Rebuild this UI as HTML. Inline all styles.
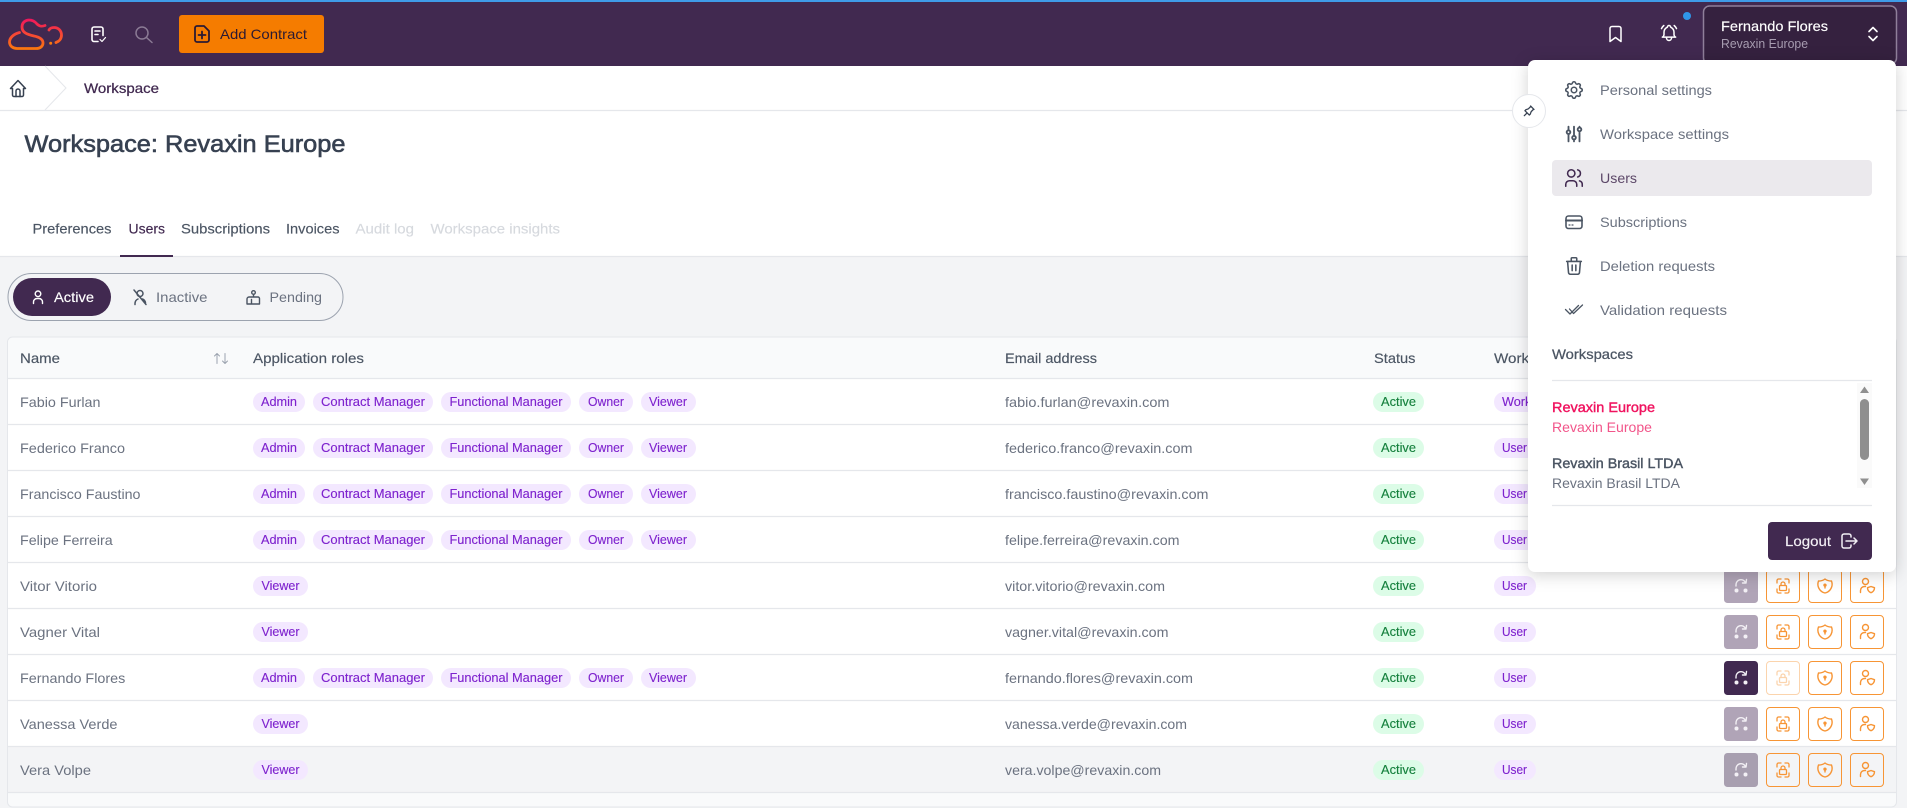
<!DOCTYPE html>
<html lang="en"><head><meta charset="utf-8"><title>Workspace: Revaxin Europe</title>
<style>
html,body{margin:0;padding:0;width:1907px;height:808px;overflow:hidden;background:#f3f4f6}
svg{display:block}
text{font-family:"Liberation Sans",sans-serif;font-size:14px;fill:currentColor;white-space:pre}
.m{stroke:currentColor;stroke-width:.25px}
.s{stroke:currentColor;stroke-width:.15px}
.c{font-size:12.5px;color:#7e22ce;stroke:currentColor;stroke-width:.12px}
.g{font-size:12.5px;color:#15803d;stroke:currentColor;stroke-width:.12px}
.n{color:#6b7280}
.h{color:#4b5563}
.mi{color:#6b7280}
.ic{fill:none;stroke:currentColor;stroke-linecap:round;stroke-linejoin:round}
.ln{stroke:#e5e7eb;stroke-width:1.2}
</style></head><body>
<svg xmlns="http://www.w3.org/2000/svg" width="1907" height="808" viewBox="0 0 1907 808">
<defs>
<linearGradient id="lg" gradientUnits="userSpaceOnUse" x1="30" y1="18" x2="30" y2="50"><stop offset="0" stop-color="#f0135f"/><stop offset="1" stop-color="#fb7a0c"/></linearGradient>
<g id="a1" class="ic" stroke-width="1.400"><path d="M-5 0V-1a5 5 0 0 1 9.500-2.500"/><path d="M5.500 -6.500l-.5 3.500h-3.500"/><circle cx="-4.500" cy="4.500" r="2" fill="currentColor" stroke="none"/><circle cx="4.500" cy="4.500" r="2" fill="currentColor" stroke="none"/></g>
<g id="a2" class="ic" stroke-width="1.300"><path d="M-6 -3v-2.500a1.500 1.500 0 0 1 1.500-1.500H-2M2 -7h2.500A1.500 1.500 0 0 1 6 -5.500V-3M6 3v2.500A1.500 1.500 0 0 1 4.500 7H2M-2 7h-2.500A1.500 1.500 0 0 1 -6 5.500V3"/><rect x="-3.500" y="-.5" width="7" height="5" rx="1"/><path d="M-2 -.5V-2a2 2 0 0 1 4 0V-.5"/></g>
<g id="a3" class="ic" stroke-width="1.400"><path d="M0 -7a10 10 0 0 0 6.500 2A9 9 0 0 1 0 7a9 9 0 0 1-6.500-12A10 10 0 0 0 0 -7z"/><circle cx="0" cy="-.8" r="1" fill="currentColor"/><path d="M0 0v2"/></g>
<g id="a4" class="ic" stroke-width="1.400"><circle cx="-1.500" cy="-4.500" r="3"/><path d="M-6.500 6.500v-2a4 4 0 0 1 4-4h1"/><path d="M4 0.500l3.500 1.200c0 2.500-1.200 4-3.500 5-2.300-1-3.500-2.500-3.500-5z"/></g>
<g id="b"><rect x="-16.500" y="-16.500" width="33" height="33" rx="3.500" fill="none" stroke="#f79535" stroke-width="1"/></g>
</defs>

<!-- page -->
<rect width="1907" height="808" fill="#f3f4f6"/>
<rect y="66" width="1907" height="190" fill="#fff"/>

<!-- header -->
<rect width="1907" height="66" fill="#412950"/>
<rect width="1907" height="2" fill="#3f9be8"/>
<g fill="none" stroke="url(#lg)" stroke-width="2.800" stroke-linecap="round" stroke-linejoin="round">
<path d="M19.500 32.500C13.500 34 9.500 38 9.500 42C9.500 46 13 48.500 17 48.500L36 48.500C40.500 48.500 43 46 43 43C43 39 39 37 34 36C28 34.500 22 33 22 27C22 22 26 20 29 20C33 20 35 21.500 37 24C39 26 41 27 45 25.500"/>
<path d="M49 30C50 28 52 27.500 54 27.500C58.500 27.500 61.500 31 61.500 35C61.500 39 59 41.500 56 42.500"/>
</g>
<circle cx="50.700" cy="43.300" r="1.500" fill="#fb7a0c"/>
<g class="ic" stroke-width="1.600" style="color:#fff"><path d="M98 41.500H94a2 2 0 0 1-2-2V29a2 2 0 0 1 2-2h7a2 2 0 0 1 2 2v6.500"/><path d="M95 31h5M95 34.500h3"/><path d="M100 39.500l2 2 3.500-4" stroke-width="1.200"/></g>
<g class="ic" stroke-width="1.500" style="color:#8a7a94"><circle cx="142" cy="33" r="6"/><path d="M146.500 37.500l5.500 5"/></g>
<rect x="179" y="15" width="145" height="38" rx="3" fill="#f57c00"/>
<g class="ic" stroke-width="1.800" style="color:#2b1a33"><path d="M197 26h7l5 5v9a2 2 0 0 1-2 2h-10a2 2 0 0 1-2-2V28a2 2 0 0 1 2-2z"/><path d="M202 31.500v7M198.500 35h7"/></g>
<text x="220" y="39" textLength="87" lengthAdjust="spacingAndGlyphs" style="color:#2b1a33">Add Contract</text>

<g class="ic" stroke-width="1.500" style="color:#fff"><path d="M1610 41.500V28.500a2 2 0 0 1 2-2h7a2 2 0 0 1 2 2V41.500l-5.500-4z"/></g>
<svg x="1659" y="23" width="20" height="20" viewBox="0 0 24 24" class="ic" stroke-width="1.800" style="color:#fff"><path d="M10 5a2 2 0 1 1 4 0a7 7 0 0 1 4 6v3a4 4 0 0 0 2 3h-16a4 4 0 0 0 2-3v-3a7 7 0 0 1 4-6M9 17v1a3 3 0 0 0 6 0v-1M21 6.727a11.050 11.050 0 0 0-2.794-3.727M3 6.727a11.050 11.050 0 0 1 2.792-3.727"/></svg>
<circle cx="1687" cy="16" r="4" fill="#2f96e8"/>
<rect x="1703.500" y="6" width="193" height="58" rx="6" fill="#35213f" stroke="#8f7f9a" stroke-width="1.500"/>
<text x="1721" y="31" textLength="107" lengthAdjust="spacingAndGlyphs" class="s" style="color:#fff">Fernando Flores</text>
<text x="1721" y="48" textLength="87" lengthAdjust="spacingAndGlyphs" style="font-size:12.500px;color:#a79cb0">Revaxin Europe</text>
<g class="ic" stroke-width="1.600" style="color:#fff"><path d="M1869 31.500l4-4 4 4M1869 36.500l4 4 4-4"/></g>

<!-- breadcrumb -->
<line x1="0" x2="1907" y1="110.500" y2="110.500" class="ln"/>
<path d="M45 66L66 88L45 110" fill="none" stroke="#e5e7eb" stroke-width="1"/>
<g class="ic" stroke-width="1.500" style="color:#374151"><path d="M10.500 88.500L18 80.500L25.500 88.500H23.500V95a1.500 1.500 0 0 1-1.500 1.500H14a1.500 1.500 0 0 1-1.500-1.500V88.500z"/><path d="M16 96.500V91a2 2 0 0 1 4 0v5.500"/></g>
<text x="84" y="93" textLength="75" lengthAdjust="spacingAndGlyphs" class="m" style="color:#412950">Workspace</text>

<!-- title -->
<text x="24.500" y="152" textLength="321" lengthAdjust="spacingAndGlyphs" class="m" style="font-size:24px;color:#374151;stroke-width:.6px">Workspace: Revaxin Europe</text>

<!-- tabs -->
<line x1="0" x2="1907" y1="256.500" y2="256.500" class="ln"/>
<text x="32.500" y="233.500" textLength="79" lengthAdjust="spacingAndGlyphs" class="s" style="color:#4b5563">Preferences</text>
<text x="128.500" y="233.500" textLength="36.500" lengthAdjust="spacingAndGlyphs" class="s" style="color:#412950">Users</text>
<text x="181" y="233.500" textLength="89" lengthAdjust="spacingAndGlyphs" class="s" style="color:#4b5563">Subscriptions</text>
<text x="286" y="233.500" textLength="53.500" lengthAdjust="spacingAndGlyphs" class="s" style="color:#4b5563">Invoices</text>
<text x="355.500" y="233.500" textLength="58.500" lengthAdjust="spacingAndGlyphs" class="s" style="color:#d6d9de">Audit log</text>
<text x="430.500" y="233.500" textLength="129.500" lengthAdjust="spacingAndGlyphs" class="s" style="color:#d6d9de">Workspace insights</text>
<rect x="120" y="255" width="53" height="2" fill="#412950"/>

<!-- segmented -->
<rect x="8" y="273.500" width="335" height="47" rx="23.500" fill="#f3f4f6" stroke="#9ca3af" stroke-width="1"/>
<rect x="13" y="278" width="98" height="38" rx="19" fill="#412950"/>
<g class="ic" stroke-width="1.400" style="color:#fff"><circle cx="38" cy="293.800" r="2.800"/><path d="M33.500 303.500v-1.500a3.500 3.500 0 0 1 3.500-3.500h2a3.500 3.500 0 0 1 3.500 3.500v1.500"/></g>
<text x="54" y="302" textLength="40" lengthAdjust="spacingAndGlyphs" class="s" style="color:#fff">Active</text>
<g class="ic" stroke-width="1.500" style="color:#4b5563"><circle cx="140" cy="293.500" r="3"/><path d="M134 290l12 14.500M135 304.500v-1a5 5 0 0 1 3-4.500M142.500 299a5 5 0 0 1 3 4"/></g>
<text x="156" y="302" textLength="51.500" lengthAdjust="spacingAndGlyphs" style="color:#6b7280">Inactive</text>
<g class="ic" stroke-width="1.400" style="color:#4b5563"><circle cx="253.500" cy="292.500" r="1.800"/><path d="M247 299a2 2 0 0 1 2-2h9a1.500 1.500 0 0 1 1.500 1.500V304H247zM251.500 299.500V304M253.500 294.500v2.500"/></g>
<text x="269.500" y="302" textLength="52.500" lengthAdjust="spacingAndGlyphs" style="color:#6b7280">Pending</text>

<!-- table card -->
<rect x="7.500" y="337" width="1889" height="470" rx="5" fill="#f9fafb" stroke="#e5e7eb" stroke-width="1"/>
<rect x="8" y="379" width="1888" height="413" fill="#fff"/>
<rect x="8" y="746" width="1888" height="46" fill="#f3f4f6"/>
<g class="ln">
<line x1="8" x2="1896" y1="378.500" y2="378.500"/><line x1="8" x2="1896" y1="424.500" y2="424.500"/><line x1="8" x2="1896" y1="470.500" y2="470.500"/><line x1="8" x2="1896" y1="516.500" y2="516.500"/><line x1="8" x2="1896" y1="562.500" y2="562.500"/><line x1="8" x2="1896" y1="608.500" y2="608.500"/><line x1="8" x2="1896" y1="654.500" y2="654.500"/><line x1="8" x2="1896" y1="700.500" y2="700.500"/><line x1="8" x2="1896" y1="746.500" y2="746.500"/><line x1="8" x2="1896" y1="792.500" y2="792.500"/>
</g>
<text x="20" y="363" textLength="40" lengthAdjust="spacingAndGlyphs" class="s h">Name</text>
<g class="ic" stroke-width="1" style="color:#9ca3af"><path d="M217 363.500v-10M214.500 356l2.500-2.500 2.500 2.500M225 353.500v10M222.500 361l2.500 2.500 2.500-2.500"/></g>
<text x="253" y="363" textLength="111" lengthAdjust="spacingAndGlyphs" class="s h">Application roles</text>
<text x="1005" y="363" textLength="92" lengthAdjust="spacingAndGlyphs" class="s h">Email address</text>
<text x="1374" y="363" textLength="41.500" lengthAdjust="spacingAndGlyphs" class="s h">Status</text>
<text x="1494" y="363" textLength="105" lengthAdjust="spacingAndGlyphs" class="s h">Workspace role</text>

<!-- row 1 -->
<g transform="translate(0,378)">
<text x="20" y="29" textLength="80.500" lengthAdjust="spacingAndGlyphs" class="n">Fabio Furlan</text>
<rect x="253" y="14" width="52" height="20" rx="10" fill="#f3e8ff"/><text x="261" y="28" textLength="36" lengthAdjust="spacingAndGlyphs" class="c">Admin</text>
<rect x="313" y="14" width="120" height="20" rx="10" fill="#f3e8ff"/><text x="321" y="28" textLength="104" lengthAdjust="spacingAndGlyphs" class="c">Contract Manager</text>
<rect x="441" y="14" width="130" height="20" rx="10" fill="#f3e8ff"/><text x="449.500" y="28" textLength="113" lengthAdjust="spacingAndGlyphs" class="c">Functional Manager</text>
<rect x="579" y="14" width="54" height="20" rx="10" fill="#f3e8ff"/><text x="588" y="28" textLength="36" lengthAdjust="spacingAndGlyphs" class="c">Owner</text>
<rect x="641" y="14" width="55" height="20" rx="10" fill="#f3e8ff"/><text x="649" y="28" textLength="38" lengthAdjust="spacingAndGlyphs" class="c">Viewer</text>
<text x="1005" y="29" textLength="164.500" lengthAdjust="spacingAndGlyphs" class="n">fabio.furlan@revaxin.com</text>
<rect x="1373" y="14" width="51" height="20" rx="10" fill="#dcfce7"/><text x="1381" y="28" textLength="35" lengthAdjust="spacingAndGlyphs" class="g">Active</text>
<rect x="1494" y="14" width="118" height="20" rx="10" fill="#f3e8ff"/><text x="1502" y="28" textLength="102" lengthAdjust="spacingAndGlyphs" class="c">Workspace Admin</text>
</g>
<!-- row 2 -->
<g transform="translate(0,424)">
<text x="20" y="29" textLength="105" lengthAdjust="spacingAndGlyphs" class="n">Federico Franco</text>
<rect x="253" y="14" width="52" height="20" rx="10" fill="#f3e8ff"/><text x="261" y="28" textLength="36" lengthAdjust="spacingAndGlyphs" class="c">Admin</text>
<rect x="313" y="14" width="120" height="20" rx="10" fill="#f3e8ff"/><text x="321" y="28" textLength="104" lengthAdjust="spacingAndGlyphs" class="c">Contract Manager</text>
<rect x="441" y="14" width="130" height="20" rx="10" fill="#f3e8ff"/><text x="449.500" y="28" textLength="113" lengthAdjust="spacingAndGlyphs" class="c">Functional Manager</text>
<rect x="579" y="14" width="54" height="20" rx="10" fill="#f3e8ff"/><text x="588" y="28" textLength="36" lengthAdjust="spacingAndGlyphs" class="c">Owner</text>
<rect x="641" y="14" width="55" height="20" rx="10" fill="#f3e8ff"/><text x="649" y="28" textLength="38" lengthAdjust="spacingAndGlyphs" class="c">Viewer</text>
<text x="1005" y="29" textLength="187.500" lengthAdjust="spacingAndGlyphs" class="n">federico.franco@revaxin.com</text>
<rect x="1373" y="14" width="51" height="20" rx="10" fill="#dcfce7"/><text x="1381" y="28" textLength="35" lengthAdjust="spacingAndGlyphs" class="g">Active</text>
<rect x="1494" y="14" width="42" height="20" rx="10" fill="#f3e8ff"/><text x="1502" y="28" textLength="25" lengthAdjust="spacingAndGlyphs" class="c">User</text>
</g>
<!-- row 3 -->
<g transform="translate(0,470)">
<text x="20" y="29" textLength="120.500" lengthAdjust="spacingAndGlyphs" class="n">Francisco Faustino</text>
<rect x="253" y="14" width="52" height="20" rx="10" fill="#f3e8ff"/><text x="261" y="28" textLength="36" lengthAdjust="spacingAndGlyphs" class="c">Admin</text>
<rect x="313" y="14" width="120" height="20" rx="10" fill="#f3e8ff"/><text x="321" y="28" textLength="104" lengthAdjust="spacingAndGlyphs" class="c">Contract Manager</text>
<rect x="441" y="14" width="130" height="20" rx="10" fill="#f3e8ff"/><text x="449.500" y="28" textLength="113" lengthAdjust="spacingAndGlyphs" class="c">Functional Manager</text>
<rect x="579" y="14" width="54" height="20" rx="10" fill="#f3e8ff"/><text x="588" y="28" textLength="36" lengthAdjust="spacingAndGlyphs" class="c">Owner</text>
<rect x="641" y="14" width="55" height="20" rx="10" fill="#f3e8ff"/><text x="649" y="28" textLength="38" lengthAdjust="spacingAndGlyphs" class="c">Viewer</text>
<text x="1005" y="29" textLength="203.500" lengthAdjust="spacingAndGlyphs" class="n">francisco.faustino@revaxin.com</text>
<rect x="1373" y="14" width="51" height="20" rx="10" fill="#dcfce7"/><text x="1381" y="28" textLength="35" lengthAdjust="spacingAndGlyphs" class="g">Active</text>
<rect x="1494" y="14" width="42" height="20" rx="10" fill="#f3e8ff"/><text x="1502" y="28" textLength="25" lengthAdjust="spacingAndGlyphs" class="c">User</text>
</g>
<!-- row 4 -->
<g transform="translate(0,516)">
<text x="20" y="29" textLength="92.700" lengthAdjust="spacingAndGlyphs" class="n">Felipe Ferreira</text>
<rect x="253" y="14" width="52" height="20" rx="10" fill="#f3e8ff"/><text x="261" y="28" textLength="36" lengthAdjust="spacingAndGlyphs" class="c">Admin</text>
<rect x="313" y="14" width="120" height="20" rx="10" fill="#f3e8ff"/><text x="321" y="28" textLength="104" lengthAdjust="spacingAndGlyphs" class="c">Contract Manager</text>
<rect x="441" y="14" width="130" height="20" rx="10" fill="#f3e8ff"/><text x="449.500" y="28" textLength="113" lengthAdjust="spacingAndGlyphs" class="c">Functional Manager</text>
<rect x="579" y="14" width="54" height="20" rx="10" fill="#f3e8ff"/><text x="588" y="28" textLength="36" lengthAdjust="spacingAndGlyphs" class="c">Owner</text>
<rect x="641" y="14" width="55" height="20" rx="10" fill="#f3e8ff"/><text x="649" y="28" textLength="38" lengthAdjust="spacingAndGlyphs" class="c">Viewer</text>
<text x="1005" y="29" textLength="174.500" lengthAdjust="spacingAndGlyphs" class="n">felipe.ferreira@revaxin.com</text>
<rect x="1373" y="14" width="51" height="20" rx="10" fill="#dcfce7"/><text x="1381" y="28" textLength="35" lengthAdjust="spacingAndGlyphs" class="g">Active</text>
<rect x="1494" y="14" width="42" height="20" rx="10" fill="#f3e8ff"/><text x="1502" y="28" textLength="25" lengthAdjust="spacingAndGlyphs" class="c">User</text>
</g>
<!-- row 5 -->
<g transform="translate(0,562)">
<text x="20" y="29" textLength="77" lengthAdjust="spacingAndGlyphs" class="n">Vitor Vitorio</text>
<rect x="253" y="14" width="55" height="20" rx="10" fill="#f3e8ff"/><text x="261.500" y="28" textLength="38" lengthAdjust="spacingAndGlyphs" class="c">Viewer</text>
<text x="1005" y="29" textLength="160" lengthAdjust="spacingAndGlyphs" class="n">vitor.vitorio@revaxin.com</text>
<rect x="1373" y="14" width="51" height="20" rx="10" fill="#dcfce7"/><text x="1381" y="28" textLength="35" lengthAdjust="spacingAndGlyphs" class="g">Active</text>
<rect x="1494" y="14" width="42" height="20" rx="10" fill="#f3e8ff"/><text x="1502" y="28" textLength="25" lengthAdjust="spacingAndGlyphs" class="c">User</text>
<rect x="1724" y="7" width="34" height="34" rx="3.500" fill="#b0a4b7"/><use href="#a1" x="1741" y="24" style="color:#f3f0f5"/>
<use href="#b" x="1783" y="24"/><use href="#a2" x="1783" y="24" style="color:#f79535"/>
<use href="#b" x="1825" y="24"/><use href="#a3" x="1825" y="24" style="color:#f79535"/>
<use href="#b" x="1867" y="24"/><use href="#a4" x="1867" y="24" style="color:#f79535"/>
</g>
<!-- row 6 -->
<g transform="translate(0,608)">
<text x="20" y="29" textLength="80" lengthAdjust="spacingAndGlyphs" class="n">Vagner Vital</text>
<rect x="253" y="14" width="55" height="20" rx="10" fill="#f3e8ff"/><text x="261.500" y="28" textLength="38" lengthAdjust="spacingAndGlyphs" class="c">Viewer</text>
<text x="1005" y="29" textLength="163.500" lengthAdjust="spacingAndGlyphs" class="n">vagner.vital@revaxin.com</text>
<rect x="1373" y="14" width="51" height="20" rx="10" fill="#dcfce7"/><text x="1381" y="28" textLength="35" lengthAdjust="spacingAndGlyphs" class="g">Active</text>
<rect x="1494" y="14" width="42" height="20" rx="10" fill="#f3e8ff"/><text x="1502" y="28" textLength="25" lengthAdjust="spacingAndGlyphs" class="c">User</text>
<rect x="1724" y="7" width="34" height="34" rx="3.500" fill="#b0a4b7"/><use href="#a1" x="1741" y="24" style="color:#f3f0f5"/>
<use href="#b" x="1783" y="24"/><use href="#a2" x="1783" y="24" style="color:#f79535"/>
<use href="#b" x="1825" y="24"/><use href="#a3" x="1825" y="24" style="color:#f79535"/>
<use href="#b" x="1867" y="24"/><use href="#a4" x="1867" y="24" style="color:#f79535"/>
</g>
<!-- row 7 -->
<g transform="translate(0,654)">
<text x="20" y="29" textLength="105.300" lengthAdjust="spacingAndGlyphs" class="n">Fernando Flores</text>
<rect x="253" y="14" width="52" height="20" rx="10" fill="#f3e8ff"/><text x="261" y="28" textLength="36" lengthAdjust="spacingAndGlyphs" class="c">Admin</text>
<rect x="313" y="14" width="120" height="20" rx="10" fill="#f3e8ff"/><text x="321" y="28" textLength="104" lengthAdjust="spacingAndGlyphs" class="c">Contract Manager</text>
<rect x="441" y="14" width="130" height="20" rx="10" fill="#f3e8ff"/><text x="449.500" y="28" textLength="113" lengthAdjust="spacingAndGlyphs" class="c">Functional Manager</text>
<rect x="579" y="14" width="54" height="20" rx="10" fill="#f3e8ff"/><text x="588" y="28" textLength="36" lengthAdjust="spacingAndGlyphs" class="c">Owner</text>
<rect x="641" y="14" width="55" height="20" rx="10" fill="#f3e8ff"/><text x="649" y="28" textLength="38" lengthAdjust="spacingAndGlyphs" class="c">Viewer</text>
<text x="1005" y="29" textLength="188" lengthAdjust="spacingAndGlyphs" class="n">fernando.flores@revaxin.com</text>
<rect x="1373" y="14" width="51" height="20" rx="10" fill="#dcfce7"/><text x="1381" y="28" textLength="35" lengthAdjust="spacingAndGlyphs" class="g">Active</text>
<rect x="1494" y="14" width="42" height="20" rx="10" fill="#f3e8ff"/><text x="1502" y="28" textLength="25" lengthAdjust="spacingAndGlyphs" class="c">User</text>
<rect x="1724" y="7" width="34" height="34" rx="3.500" fill="#412950"/><use href="#a1" x="1741" y="24" style="color:#f3f0f5"/>
<g opacity=".4"><use href="#b" x="1783" y="24"/><use href="#a2" x="1783" y="24" style="color:#f79535"/></g>
<use href="#b" x="1825" y="24"/><use href="#a3" x="1825" y="24" style="color:#f79535"/>
<use href="#b" x="1867" y="24"/><use href="#a4" x="1867" y="24" style="color:#f79535"/>
</g>
<!-- row 8 -->
<g transform="translate(0,700)">
<text x="20" y="29" textLength="97.500" lengthAdjust="spacingAndGlyphs" class="n">Vanessa Verde</text>
<rect x="253" y="14" width="55" height="20" rx="10" fill="#f3e8ff"/><text x="261.500" y="28" textLength="38" lengthAdjust="spacingAndGlyphs" class="c">Viewer</text>
<text x="1005" y="29" textLength="182" lengthAdjust="spacingAndGlyphs" class="n">vanessa.verde@revaxin.com</text>
<rect x="1373" y="14" width="51" height="20" rx="10" fill="#dcfce7"/><text x="1381" y="28" textLength="35" lengthAdjust="spacingAndGlyphs" class="g">Active</text>
<rect x="1494" y="14" width="42" height="20" rx="10" fill="#f3e8ff"/><text x="1502" y="28" textLength="25" lengthAdjust="spacingAndGlyphs" class="c">User</text>
<rect x="1724" y="7" width="34" height="34" rx="3.500" fill="#b0a4b7"/><use href="#a1" x="1741" y="24" style="color:#f3f0f5"/>
<use href="#b" x="1783" y="24"/><use href="#a2" x="1783" y="24" style="color:#f79535"/>
<use href="#b" x="1825" y="24"/><use href="#a3" x="1825" y="24" style="color:#f79535"/>
<use href="#b" x="1867" y="24"/><use href="#a4" x="1867" y="24" style="color:#f79535"/>
</g>
<!-- row 9 -->
<g transform="translate(0,746)">
<text x="20" y="29" textLength="71" lengthAdjust="spacingAndGlyphs" class="n">Vera Volpe</text>
<rect x="253" y="14" width="55" height="20" rx="10" fill="#f3e8ff"/><text x="261.500" y="28" textLength="38" lengthAdjust="spacingAndGlyphs" class="c">Viewer</text>
<text x="1005" y="29" textLength="156" lengthAdjust="spacingAndGlyphs" class="n">vera.volpe@revaxin.com</text>
<rect x="1373" y="14" width="51" height="20" rx="10" fill="#dcfce7"/><text x="1381" y="28" textLength="35" lengthAdjust="spacingAndGlyphs" class="g">Active</text>
<rect x="1494" y="14" width="42" height="20" rx="10" fill="#f3e8ff"/><text x="1502" y="28" textLength="25" lengthAdjust="spacingAndGlyphs" class="c">User</text>
<rect x="1724" y="7" width="34" height="34" rx="3.500" fill="#a89fb0"/><use href="#a1" x="1741" y="24" style="color:#f3f0f5"/>
<use href="#b" x="1783" y="24"/><use href="#a2" x="1783" y="24" style="color:#f79535"/>
<use href="#b" x="1825" y="24"/><use href="#a3" x="1825" y="24" style="color:#f79535"/>
<use href="#b" x="1867" y="24"/><use href="#a4" x="1867" y="24" style="color:#f79535"/>
</g>

<!-- dropdown panel -->
<rect x="1528" y="60" width="368" height="512" rx="7" fill="#fff" style="filter:drop-shadow(0 3px 8px rgba(0,0,0,.18))"/>
<circle cx="1529" cy="111" r="16.500" fill="#fff" stroke="#e5e7eb"/>
<svg x="1521.500" y="103.500" width="15" height="15" viewBox="0 0 24 24" class="ic" stroke-width="2" style="color:#374151"><path d="M15 4.500l-4 4l-4 1.500l-1.500 1.500l7 7l1.500-1.500l1.500-4l4-4M9 15l-4.500 4.500M14.500 4l5.500 5.500"/></svg>

<rect x="1552" y="160" width="320" height="36" rx="4" fill="#ebe9ed"/>

<svg x="1563" y="79" width="22" height="22" viewBox="0 0 24 24" class="ic" stroke-width="1.700" style="color:#4b5563"><path d="M10.325 4.317c.426-1.756 2.924-1.756 3.350 0a1.724 1.724 0 0 0 2.573 1.066c1.543-.94 3.310.826 2.370 2.370a1.724 1.724 0 0 0 1.065 2.572c1.756.426 1.756 2.924 0 3.350a1.724 1.724 0 0 0-1.066 2.573c.94 1.543-.826 3.310-2.370 2.370a1.724 1.724 0 0 0-2.572 1.065c-.426 1.756-2.924 1.756-3.350 0a1.724 1.724 0 0 0-2.573-1.066c-1.543.94-3.310-.826-2.370-2.370a1.724 1.724 0 0 0-1.065-2.572c-1.756-.426-1.756-2.924 0-3.350a1.724 1.724 0 0 0 1.066-2.573c-.94-1.543.826-3.310 2.370-2.370c1 .608 2.296.07 2.572-1.065z"/><circle cx="12" cy="12" r="3"/></svg>
<text x="1600" y="95" textLength="112" lengthAdjust="spacingAndGlyphs" class="mi">Personal settings</text>

<svg x="1563" y="123" width="22" height="22" viewBox="0 0 24 24" class="ic" stroke-width="2" style="color:#4b5563"><path d="M4 10a2 2 0 1 0 4 0a2 2 0 0 0-4 0M6 4v4M6 12v8M10 16a2 2 0 1 0 4 0a2 2 0 0 0-4 0M12 4v10M12 18v2M16 7a2 2 0 1 0 4 0a2 2 0 0 0-4 0M18 4v1M18 9v11"/></svg>
<text x="1600" y="139" textLength="129" lengthAdjust="spacingAndGlyphs" class="mi">Workspace settings</text>

<svg x="1563" y="167" width="22" height="22" viewBox="0 0 24 24" class="ic" stroke-width="1.700" style="color:#412950"><path d="M5 7a4 4 0 1 0 8 0a4 4 0 1 0-8 0M3 21v-2a4 4 0 0 1 4-4h4a4 4 0 0 1 4 4v2M16 3.130a4 4 0 0 1 0 7.750M21 21v-2a4 4 0 0 0-3-3.850"/></svg>
<text x="1600" y="183" textLength="37" lengthAdjust="spacingAndGlyphs" style="color:#5c4768">Users</text>

<g class="ic" stroke-width="1.600" style="color:#4b5563"><rect x="1566" y="216" width="16" height="12.500" rx="2.500"/><path d="M1566 220.500h16" stroke-width="2"/><path d="M1569 225h1M1572 225h1" stroke-width="1.200"/></g>
<text x="1600" y="227" textLength="87" lengthAdjust="spacingAndGlyphs" class="mi">Subscriptions</text>

<svg x="1563" y="255" width="22" height="22" viewBox="0 0 24 24" class="ic" stroke-width="1.700" style="color:#4b5563"><path d="M4 7h16M10 11v6M14 11v6M5 7l1 12a2 2 0 0 0 2 2h8a2 2 0 0 0 2-2l1-12M9 7v-3a1 1 0 0 1 1-1h4a1 1 0 0 1 1 1v3"/></svg>
<text x="1600" y="271" textLength="115" lengthAdjust="spacingAndGlyphs" class="mi">Deletion requests</text>

<g class="ic" stroke-width="1.300" style="color:#4b5563"><path d="M1565.500 309.500l4.500 4.500 8.500-8.500M1569.500 309l4 4.500 9-8.500"/></g>
<text x="1600" y="315" textLength="127" lengthAdjust="spacingAndGlyphs" class="mi">Validation requests</text>

<text x="1552" y="359" textLength="81" lengthAdjust="spacingAndGlyphs" class="m" style="color:#4b5563">Workspaces</text>
<line x1="1552" x2="1872" y1="380.500" y2="380.500" class="ln"/>

<text x="1552" y="412" textLength="103" lengthAdjust="spacingAndGlyphs" class="m" style="color:#f0135f;stroke-width:.4px">Revaxin Europe</text>
<text x="1552" y="432" textLength="100" lengthAdjust="spacingAndGlyphs" style="color:#f2558a">Revaxin Europe</text>
<text x="1552" y="468" textLength="131" lengthAdjust="spacingAndGlyphs" class="m" style="color:#4b5563;stroke-width:.4px">Revaxin Brasil LTDA</text>
<text x="1552" y="488" textLength="128" lengthAdjust="spacingAndGlyphs" style="color:#6b7280">Revaxin Brasil LTDA</text>

<rect x="1857" y="383" width="15" height="105" fill="#fafafa"/>
<path d="M1860 393l4.500-6.500 4.500 6.500z" fill="#8f8f8f"/>
<rect x="1860" y="399" width="9" height="61" rx="4.500" fill="#8f8f8f"/>
<path d="M1860 478.500l4.500 6.500 4.500-6.500z" fill="#8f8f8f"/>
<line x1="1552" x2="1872" y1="505.500" y2="505.500" class="ln"/>

<rect x="1768" y="522" width="104" height="38" rx="4" fill="#412950"/>
<text x="1785" y="546" textLength="46" lengthAdjust="spacingAndGlyphs" class="s" style="color:#f3f0f5">Logout</text>
<g class="ic" stroke-width="1.500" style="color:#f3f0f5"><path d="M1851 537v-1a2 2 0 0 0-2-2h-5a2 2 0 0 0-2 2v10a2 2 0 0 0 2 2h5a2 2 0 0 0 2-2v-1M1846 541h11M1854 538l3 3-3 3"/></g>
</svg>
</body></html>
